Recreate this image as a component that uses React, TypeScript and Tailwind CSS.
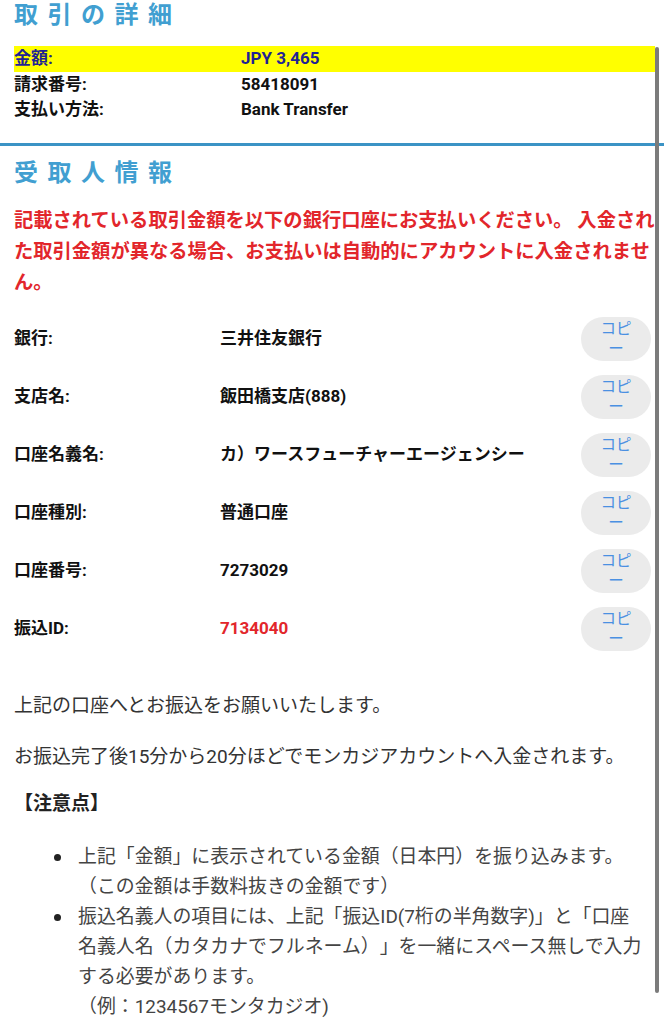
const font = "font-['Roboto','Noto_Sans_CJK_JP',sans-serif]";

const details = [
  { label: '金額:', value: 'JPY 3,465', highlight: true },
  { label: '請求番号:', value: '58418091' },
  { label: '支払い方法:', value: 'Bank Transfer' },
];

const bank = [
  { label: '銀行:', value: '三井住友銀行' },
  { label: '支店名:', value: '飯田橋支店(888)' },
  { label: '口座名義名:', value: 'カ）ワースフューチャーエージェンシー' },
  { label: '口座種別:', value: '普通口座' },
  { label: '口座番号:', value: '7273029' },
  { label: '振込ID:', value: '7134040', red: true },
];

const CopyButton = () => (
  <button className="w-[70px] h-[44px] shrink-0 rounded-full bg-[#ebebeb] px-[14px] text-[15.5px] leading-[20px] font-normal text-[#4a90e2] text-center">
    コピー
  </button>
);

const Bullet = ({ children }: { children: React.ReactNode }) => (
  <li className="flex items-start">
    <span className="mt-[12px] ml-[54px] w-[7px] h-[7px] shrink-0 rounded-full bg-[#222]" />
    <div className="ml-[17px] w-[568.5px]">{children}</div>
  </li>
);

export default function App() {
  return (
    <div className={`relative w-[664px] h-[1024px] overflow-hidden bg-white ${font} [text-spacing-trim:space-all]`}>
      <h2 className="pl-[14px] text-[24px] leading-[30px] tracking-[9.5px] font-bold text-[#419fd1]">取引の詳細</h2>

      <div className="mt-[16px] ml-[14px] w-[641px] text-[17px] font-bold text-[#111]">
        {details.map((d) => (
          <div
            key={d.label}
            className={`flex items-center h-[25.5px] ${d.highlight ? 'bg-[#ffff00] text-[#1f2394]' : ''}`}
          >
            <span className="w-[227px]">{d.label}</span>
            <span>{d.value}</span>
          </div>
        ))}
      </div>

      <div className="mt-[20px] h-[3px] bg-[#3b93c5]" />

      <h2 className="mt-[12px] pl-[14px] text-[24px] leading-[30px] tracking-[9.5px] font-bold text-[#419fd1]">受取人情報</h2>

      <p className="mt-[17px] ml-[14px] w-[645px] text-[19.3px] leading-[31px] font-bold text-[#e2262b]">
        記載されている取引金額を以下の銀行口座にお支払いください。 入金された取引金額が異なる場合、お支払いは自動的にアカウントに入金されません。
      </p>

      <div className="mt-[12px] ml-[14px] mr-[13px] text-[17px] font-bold text-[#111]">
        {bank.map((b) => (
          <div key={b.label} className="flex items-center h-[58px]">
            <span className="w-[206px] shrink-0">{b.label}</span>
            <span className={`flex-1 ${b.red ? 'text-[#e2262b]' : ''}`}>{b.value}</span>
            <CopyButton />
          </div>
        ))}
      </div>

      <div className="mt-[33px] px-[14px] text-[19px] leading-[30px] text-[#333]">
        <p>上記の口座へとお振込をお願いいたします。</p>
        <p className="mt-[21px]">お振込完了後15分から20分ほどでモンカジアカウントへ入金されます。</p>
        <p className="mt-[17px] font-bold text-[#222]">【注意点】</p>
      </div>

      <ul className="mt-[23px] text-[18.9px] leading-[30px] text-[#444]">
        <Bullet>
          上記「金額」に表示されている金額（日本円）を振り込みます。
          <br />
          （この金額は手数料抜きの金額です）
        </Bullet>
        <Bullet>
          振込名義人の項目には、上記「振込ID(7桁の半角数字)」と「口座名義人名（カタカナでフルネーム）」を一緒にスペース無しで入力する必要があります。
          <br />
          （例：1234567モンタカジオ)
        </Bullet>
      </ul>

      <div className="absolute left-[655px] top-[47px] w-[4px] h-[946px] rounded-full bg-[#7b7b7b]" />
    </div>
  );
}
